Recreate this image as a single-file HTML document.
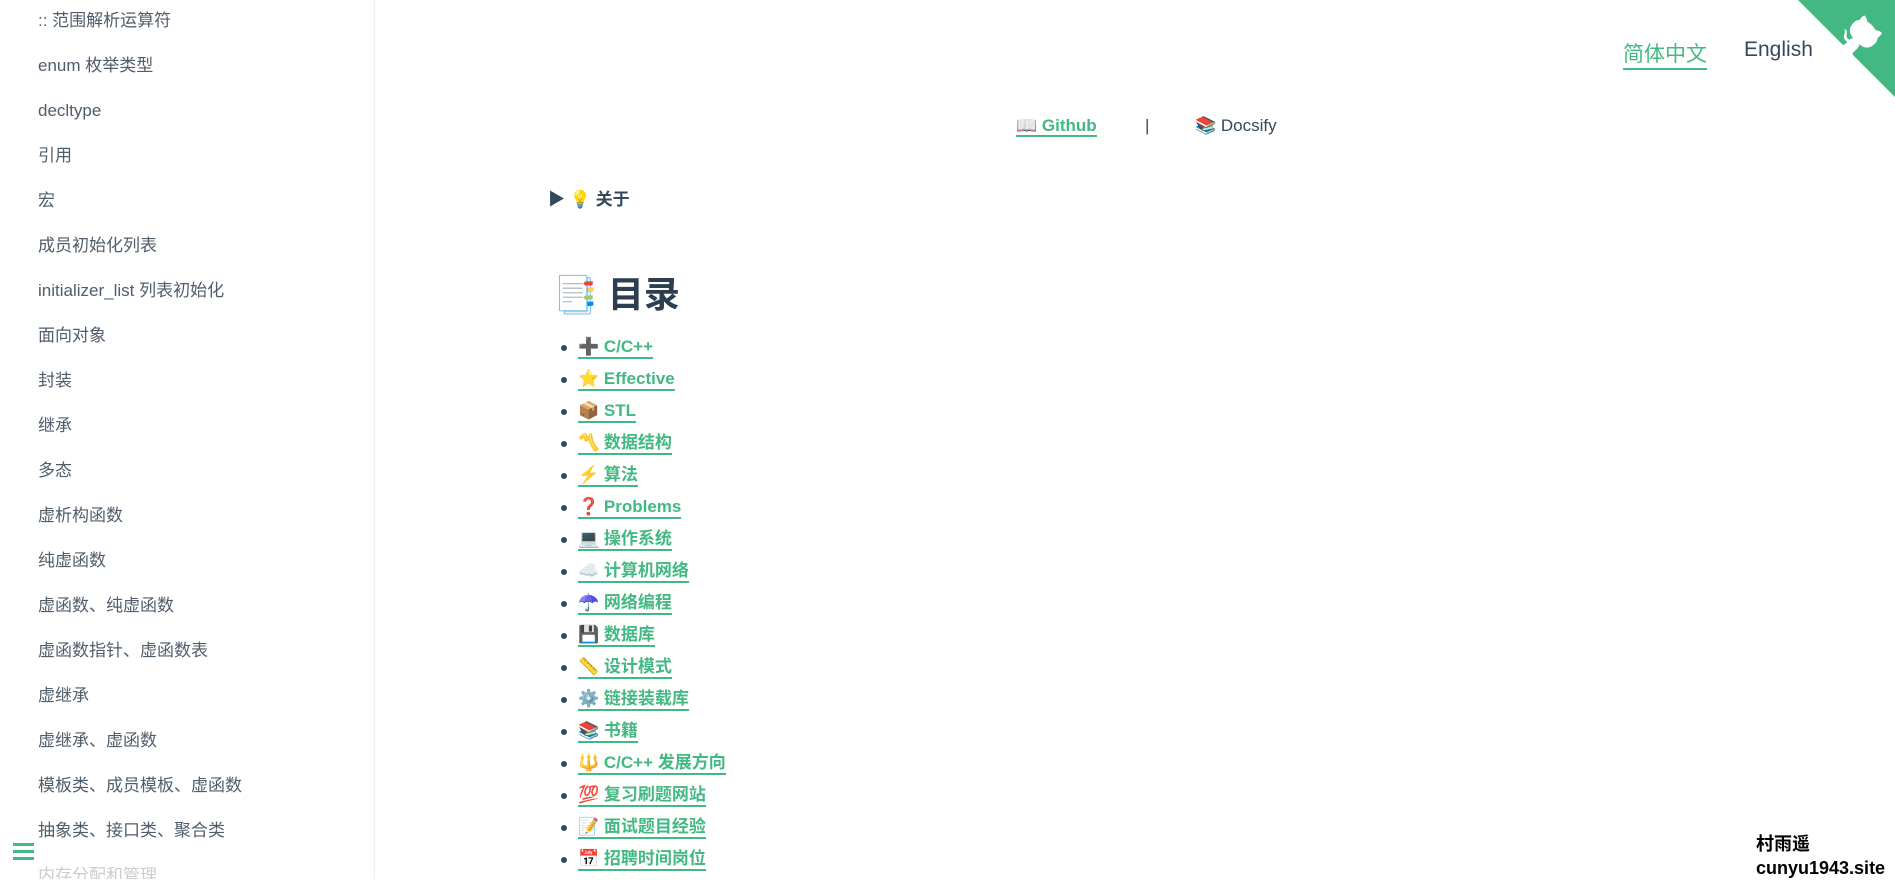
<!DOCTYPE html>
<html><head><meta charset="utf-8"><style>
*{margin:0;padding:0;box-sizing:border-box}
body{width:1895px;height:879px;overflow:hidden;background:#fff;font-family:"Liberation Sans","Noto Sans CJK SC",sans-serif;color:#34495e;position:relative}
.side{position:absolute;left:0;top:0;width:375px;height:879px;border-right:1px solid #eee;overflow:hidden}
.side div{position:absolute;left:38px;font-size:17px;line-height:22px;height:22px;color:#505d6b;white-space:nowrap}
a{color:#42b983;text-decoration:none}
.lang{position:absolute;top:38px;font-size:21px}
.nav{position:absolute;top:116px;font-size:17px;color:#34495e}
ul{position:absolute;left:561px;top:331px;list-style:none}
li{height:32px;font-size:17px;font-weight:bold;position:relative;padding-left:17px;line-height:32px}
li:before{content:"";position:absolute;left:0;top:14px;width:6px;height:6px;border-radius:50%;background:#34495e}
li a{border-bottom:2px solid #42b983;padding-bottom:1px}
</style></head><body>
<div class="side">
<div style="top:10px">:: 范围解析运算符</div>
<div style="top:55px">enum 枚举类型</div>
<div style="top:100px">decltype</div>
<div style="top:145px">引用</div>
<div style="top:190px">宏</div>
<div style="top:235px">成员初始化列表</div>
<div style="top:280px">initializer_list 列表初始化</div>
<div style="top:325px">面向对象</div>
<div style="top:370px">封装</div>
<div style="top:415px">继承</div>
<div style="top:460px">多态</div>
<div style="top:505px">虚析构函数</div>
<div style="top:550px">纯虚函数</div>
<div style="top:595px">虚函数、纯虚函数</div>
<div style="top:640px">虚函数指针、虚函数表</div>
<div style="top:685px">虚继承</div>
<div style="top:730px">虚继承、虚函数</div>
<div style="top:775px">模板类、成员模板、虚函数</div>
<div style="top:820px">抽象类、接口类、聚合类</div>
<div style="top:865px;color:#ccc">内存分配和管理</div>
</div>
<div style="position:absolute;left:13px;top:843px;width:21px;height:3px;background:#42b983;box-shadow:0 7px 0 #42b983,0 14px 0 #42b983"></div>
<div class="lang" style="left:1623px"><a href="#" style="border-bottom:2px solid #42b983;padding-bottom:2px">简体中文</a></div>
<div class="lang" style="left:1744px;color:#34495e">English</div>
<svg style="position:absolute;right:0;top:0" width="97" height="97" viewBox="0 0 250 250"><path d="M0 0L115 115 130 115 142 142 250 250 250 0Z" fill="#42b983"/><path d="M128.3 109C113.8 99.7 119 89.6 119 89.6 122 82.7 120.5 78.6 120.5 78.6 119.2 72 123.4 76.3 123.4 76.3 127.3 80.9 125.5 87.3 125.5 87.3 122.9 97.6 130.6 101.9 134.4 103.2" fill="#fff"/><path d="M115 115C114.9 115.1 118.7 116.5 119.8 115.4L133.7 101.6C136.9 99.2 139.9 98.4 142.2 98.6 133.8 88 127.5 74.4 143.8 58 148.5 53.4 154 51.2 159.7 51 160.3 49.4 163.2 43.6 171.4 40.1 171.4 40.1 176.1 42.5 178.8 56.2 183.1 58.6 187.2 61.8 190.9 65.4 194.5 69 197.7 73.2 200.1 77.6 213.8 80.2 216.3 84.9 216.3 84.9 212.7 93.1 206.9 96 205.4 96.6 205.1 102.4 203 107.8 198.3 112.5 181.9 128.9 168.3 122.5 157.7 114.1 157.9 116.9 156.7 120.9 152.7 124.9L141 136.5C139.8 137.7 141.6 141.9 141.8 141.8Z" fill="#fff"/></svg>
<div class="nav" style="left:1016px"><a href="#" style="font-weight:bold;border-bottom:2px solid #42b983">📖 Github</a></div>
<div class="nav" style="left:1145px">|</div>
<div class="nav" style="left:1195px">📚 Docsify</div>
<div style="position:absolute;left:548px;top:185px;font-size:17px;font-weight:bold;color:#34495e">▶ 💡 关于</div>
<div style="position:absolute;left:553px;top:266px;font-size:36px;font-weight:bold;color:#2c3e50">📑 目录</div>
<ul>
<li><a href="#">➕ C/C++</a></li>
<li><a href="#">⭐ Effective</a></li>
<li><a href="#">📦 STL</a></li>
<li><a href="#">〽️ 数据结构</a></li>
<li><a href="#">⚡ 算法</a></li>
<li><a href="#">❓ Problems</a></li>
<li><a href="#">💻 操作系统</a></li>
<li><a href="#">☁️ 计算机网络</a></li>
<li><a href="#">☂️ 网络编程</a></li>
<li><a href="#">💾 数据库</a></li>
<li><a href="#">📏 设计模式</a></li>
<li><a href="#">⚙️ 链接装载库</a></li>
<li><a href="#">📚 书籍</a></li>
<li><a href="#">🔱 C/C++ 发展方向</a></li>
<li><a href="#">💯 复习刷题网站</a></li>
<li><a href="#">📝 面试题目经验</a></li>
<li><a href="#">📅 招聘时间岗位</a></li>
</ul>
<div style="position:absolute;left:1756px;top:832px;font-size:18px;font-weight:bold;color:#000;line-height:24px">村雨遥<br>cunyu1943.site</div>
</body></html>
